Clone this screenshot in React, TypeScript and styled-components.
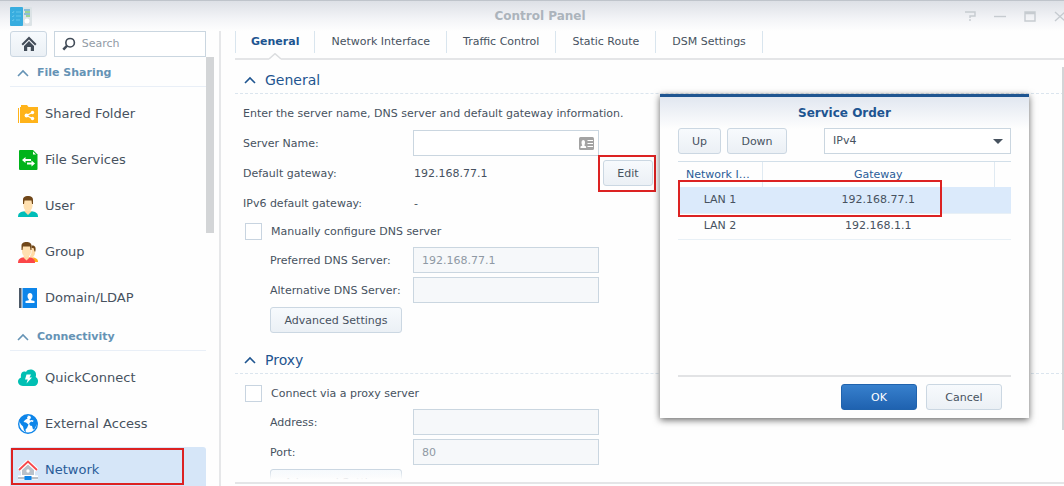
import React, { useState } from "react";
import styled, { createGlobalStyle, css } from "styled-components";

const GlobalStyle = createGlobalStyle`
  *, *::before, *::after { box-sizing: border-box; }
  body {
    margin: 0;
    background: #fefefe;
    color: #47525f;
    font: 11px/16px Verdana, "DejaVu Sans", sans-serif;
  }
  button, input, select { font: inherit; color: inherit; }
`;

const Window = styled.div`
  position: relative;
  display: flex;
  flex-direction: column;
  height: 100vh;
  overflow: hidden;
`;

/* The window frame reaches a little past the right edge of the screen. */
const TitleBar = styled.header`
  flex: none;
  display: grid;
  grid-template-columns: 1fr auto 1fr;
  align-items: center;
  width: calc(100% + 16px);
  height: 31px;
  padding: 0 10px;
  border-top: 1px solid #bfc4cb;
  background: linear-gradient(#dde0e6, #f3f4f7 60%, #fefefe);
`;

const Title = styled.h1`
  margin: 0;
  font-size: 12px;
  line-height: 16px;
  color: #acb4bc;
`;

const WindowControls = styled.div`
  display: flex;
  justify-content: flex-end;
  gap: 10px;
`;

const ControlButton = styled.button`
  display: grid;
  place-items: center;
  width: 20px;
  height: 20px;
  padding: 0;
  border: 0;
  background: none;
`;

const Main = styled.div`
  flex: 1;
  display: flex;
  min-height: 0;
`;

const Sidebar = styled.aside`
  flex: none;
  display: flex;
  flex-direction: column;
  width: 221px;
  padding-left: 10px;
  border-right: 2px solid #e6e7e9;
`;

const SearchRow = styled.div`
  flex: none;
  display: flex;
  gap: 7px;
  width: 196px;
  height: 26px;
`;

const Button = styled.button<{ $primary?: boolean; $width?: number }>`
  display: inline-flex;
  align-items: center;
  justify-content: center;
  height: 26px;
  width: ${(p) => (p.$width ? `${p.$width}px` : "auto")};
  padding: 2px 12px 0;
  border: 1px solid #cbd7e2;
  border-radius: 3px;
  background: linear-gradient(#f7fafd, #ebf0f5);
  white-space: nowrap;
  ${(p) =>
    p.$primary &&
    css`
      border-color: #2063ad;
      background: linear-gradient(#3780cd, #1f62b0);
      color: #fff;
    `}
`;

const HomeButton = styled(Button)`
  width: 37px;
  padding: 0;
`;

const SearchBox = styled.label`
  flex: 1;
  display: flex;
  align-items: center;
  gap: 6px;
  min-width: 0;
  padding: 0 7px;
  border: 1px solid #cad6e0;
  background: #fff;
`;

const SearchInput = styled.input`
  width: 100%;
  min-width: 0;
  padding: 0;
  border: 0;
  outline: 0;
  background: none;
  &::placeholder { color: #929ba5; opacity: 1; }
`;

const SidebarScroll = styled.div`
  flex: 1;
  display: flex;
  min-height: 0;
`;

const Nav = styled.nav`
  flex: none;
  width: 196px;
  overflow: hidden;
`;

const ScrollThumb = styled.div`
  width: 8px;
  height: 41%;
  background: #d3d5d7;
`;

const NavHeading = styled.button`
  display: flex;
  align-items: center;
  gap: 8px;
  width: 100%;
  height: 30px;
  padding: 3px 0 0 7px;
  border: 0;
  border-bottom: 1px solid #e9eff7;
  background: none;
  color: #6593b5;
  font-weight: bold;
`;

const NavList = styled.ul`
  margin: 0;
  padding: 4px 0 0;
  list-style: none;
`;

const NavItem = styled.li`
  position: relative;
`;

const NavLink = styled.a<{ $active?: boolean }>`
  display: flex;
  align-items: center;
  gap: 7px;
  height: 46px;
  padding-left: 8px;
  border-radius: 3px;
  background: ${(p) => (p.$active ? "#d6e6f8" : "none")};
  color: ${(p) => (p.$active ? "#2a5c98" : "#47525f")};
  font-size: 13px;
  text-decoration: none;
`;

/* Red frame that points out a spot the reader has to click. */
const Highlight = styled.span`
  position: absolute;
  inset: 1px 22px 8px 1px;
  border: 2px solid #dc2222;
  pointer-events: none;
`;

const Content = styled.main`
  flex: 1;
  display: flex;
  flex-direction: column;
  min-width: 0;
  padding: 0 0 2px 14px;
`;

const Tabs = styled.div`
  flex: none;
  display: flex;
  height: 29px;
  border-bottom: 2px solid #e4e5e7;
`;

const Tab = styled.button<{ $active?: boolean }>`
  position: relative;
  height: 22px;
  padding: 0 16px;
  border: 0;
  border-right: 1px solid #d9e5ee;
  background: none;
  white-space: nowrap;
  &:first-child {
    padding: 0 15px;
    border-left: 1px solid #d9e5ee;
  }
  ${(p) =>
    p.$active &&
    css`
      color: #1d5590;
      font-weight: bold;
    `}
`;

const TabCaret = styled.svg`
  position: absolute;
  left: calc(50% - 6px);
  top: 22px;
`;

const Pane = styled.div`
  position: relative;
  flex: 1;
  display: flex;
  flex-direction: column;
  gap: 13px;
  min-height: 0;
  padding-top: 6px;
  overflow: hidden;
  border-bottom: 2px solid #e4e5e7;
  &::after {
    content: "";
    position: absolute;
    inset: auto 0 0;
    height: 12px;
    background: linear-gradient(rgba(254, 254, 254, 0), #fefefe 80%);
  }
`;

const PaneThumb = styled.div`
  position: absolute;
  top: 7px;
  right: 0;
  width: 2px;
  height: 86%;
  background: #d3d5d7;
`;

const Section = styled.section`
  flex: none;
`;

const SectionHeading = styled.h2`
  display: flex;
  align-items: center;
  gap: 9px;
  height: 28px;
  margin: 0;
  padding-left: 9px;
  border-bottom: 1px dashed #dbe5ee;
  color: #1f5590;
  font-size: 14px;
  font-weight: normal;
`;

const SectionBody = styled.div`
  padding: 4px 0 0 8px;
`;

const Intro = styled.p`
  height: 32px;
  margin: 0;
  line-height: 32px;
`;

const Fields = styled.div<{ $indent?: boolean }>`
  display: grid;
  grid-template-columns: ${(p) => (p.$indent ? "143px" : "170px")} 186px auto;
  grid-auto-rows: 26px;
  gap: 4px 0;
  align-items: center;
  justify-content: start;
  margin-left: ${(p) => (p.$indent ? "27px" : "0")};
`;

const FieldLabel = styled.label`
  grid-column: 1;
  padding-top: 1px;
  white-space: nowrap;
`;

const FieldValue = styled.span`
  grid-column: 2;
  padding: 1px 0 0 1px;
`;

const FieldAction = styled.div`
  grid-column: 1;
  display: flex;
`;

const FieldBox = styled.div`
  grid-column: 2;
  position: relative;
  display: flex;
  align-items: center;
`;

const TextInput = styled.input`
  width: 100%;
  height: 26px;
  padding: 0 8px;
  border: 1px solid #cad6e0;
  border-radius: 0;
  background: #fff;
  &:disabled { background: #f6f8fa; color: #8f99a4; }
`;

const CardIcon = styled.svg`
  position: absolute;
  right: 5px;
`;

const EditCell = styled.div`
  position: relative;
  display: flex;
  padding-left: 4px;
  ${Highlight} { inset: -5px -3px -6px -1px; }
`;

const CheckRow = styled.label`
  display: flex;
  align-items: center;
  gap: 9px;
  height: 31px;
  padding-left: 2px;
`;

const Checkbox = styled.input`
  appearance: none;
  width: 17px;
  height: 17px;
  margin: 0;
  border: 1px solid #c8d4e0;
  background: #fff;
  &:checked { background: #3780cd; }
`;

const Dialog = styled.div`
  position: absolute;
  top: 94px;
  right: 35px;
  display: flex;
  flex-direction: column;
  width: 369px;
  height: 324px;
  padding: 0 18px;
  border-top: 3px solid #1e5591;
  background: linear-gradient(#e1e7f0, #fefefe 32px);
  box-shadow: 0 2px 7px rgba(0, 0, 0, 0.6);
`;

const DialogTitle = styled.h2`
  margin: 0;
  height: 31px;
  color: #1e5591;
  font-size: 12px;
  line-height: 32px;
  text-align: center;
`;

const Toolbar = styled.div`
  display: flex;
  gap: 6px;
  margin-bottom: 7px;
`;

const SelectBox = styled.div`
  position: relative;
  display: flex;
  align-items: center;
  width: 187px;
  margin-left: auto;
  svg { position: absolute; right: 8px; pointer-events: none; }
`;

const Select = styled.select`
  appearance: none;
  width: 100%;
  height: 26px;
  padding: 0 8px;
  border: 1px solid #cad6e0;
  border-radius: 0;
  background: #fff;
`;

const TableWrap = styled.div`
  position: relative;
  flex: 1;
  border-top: 1px solid #d2dfe9;
  border-bottom: 2px solid #e2e3e5;
  ${Highlight} { inset: 18px 69px auto 0; height: 37px; }
`;

const Table = styled.table`
  width: 100%;
  table-layout: fixed;
  border-collapse: collapse;
  text-align: center;
`;

const HeadCell = styled.th<{ $width?: number }>`
  width: ${(p) => (p.$width ? `${p.$width}px` : "auto")};
  height: 25px;
  padding: 0 8px;
  border-right: 1px solid #e0eaf2;
  color: #2a5c98;
  font-weight: normal;
  white-space: nowrap;
  overflow: hidden;
  text-overflow: ellipsis;
  &:last-child { border-right: 0; }
`;

const Row = styled.tr<{ $selected?: boolean }>`
  background: ${(p) => (p.$selected ? "#dbeafb" : "none")};
  border-bottom: 1px solid #e8f0f6;
`;

const Cell = styled.td`
  height: 26px;
  padding: 0;
`;

const DialogFooter = styled.div`
  display: flex;
  justify-content: flex-end;
  gap: 9px;
  padding: 7px 9px 8px;
`;

const Chevron = ({ color }: { color: string }) => (
  <svg width="12" height="8" viewBox="0 0 12 8" fill="none" stroke={color} strokeWidth="1.6">
    <path d="M1 7 6 2l5 5" />
  </svg>
);

const PanelLogo = () => (
  <svg width="22" height="19" viewBox="0 0 22 19">
    <rect width="22" height="19" rx="1" fill="#dce3e6" />
    <rect width="13" height="19" rx="1" fill="#38addf" />
    <path d="M2 5l1 1 1-2M6 5h5M2 9l1 1 1-2M6 9h5M2 13l1 1 1-2M6 13h4" stroke="#62c4ea" fill="none" />
    <path d="M14 3h6M14 7h6" stroke="#3c97c7" />
    <path d="M15 5h5M16 9h4" stroke="#5bc545" />
    <circle cx="17" cy="14" r="2.5" fill="#fff" />
  </svg>
);

const HomeIcon = () => (
  <svg width="16" height="16" viewBox="0 0 16 16" fill="#424c58">
    <path d="M8 .5 15.5 8l-1.4 1.4L8 3.4 1.900 9.400.5 8z" />
    <path d="M8 5l5 5v5H9.800v-4H6.200v4H3v-5z" />
  </svg>
);

const SearchIcon = () => (
  <svg width="16" height="16" viewBox="0 0 16 16" fill="none" stroke="#424c58">
    <circle cx="9.500" cy="6.500" r="5" strokeWidth="1.900" />
    <path d="M6 10 1.500 14.500" strokeWidth="3" />
  </svg>
);

const FolderIcon = () => (
  <svg width="20" height="20" viewBox="0 0 20 20">
    <path d="M0 4h1v15H0zM2 3h1V1h6l1.500 2H20v16H2z" fill="#ffb31a" />
    <path d="M14.500 8.500 8.500 11.500 14.500 14.500" stroke="#fff" strokeWidth="1.300" fill="none" />
    <g fill="#fff"><circle cx="14.500" cy="8.500" r="1.700" /><circle cx="8.500" cy="11.500" r="1.900" /><circle cx="14.500" cy="14.500" r="1.700" /></g>
  </svg>
);

const FileIcon = () => (
  <svg width="20" height="20" viewBox="0 0 20 20">
    <path d="M2 0h13l4.500 4.500V19a1 1 0 0 1-1 1H2a1 1 0 0 1-1-1V1a1 1 0 0 1 1-1z" fill="#00b31b" />
    <path d="M15 1.500V4.500h3z" fill="#fff" />
    <path d="M4 10 7.500 7v2H13v2H7.500v2zM17 13.500 13.500 10.500v2H9v2h4.500v2z" fill="#fff" />
  </svg>
);

const UserIcon = () => (
  <svg width="20" height="21" viewBox="0 0 20 21">
    <path d="M0 21c0-4 2-5 7-6h6c5 1 7 2 7 6z" fill="#00bdb8" />
    <path d="M7.500 12h5v3l1.500 0-4 4-4-4 1.500-.5z" fill="#ffd9a3" />
    <path d="M5.500 4h9v5c0 4-2 6-4.500 6s-4.500-2-4.500-6z" fill="#ffe0b0" />
    <path d="M5 8V4c0-3 2-4 5-4s5 1 5 4v4h-1l-.5-3.500h-7L6 8z" fill="#704719" />
  </svg>
);

const GroupIcon = () => (
  <svg width="20" height="21" viewBox="0 0 20 21">
    <path d="M14 15c4 1 6 2 6 5h-4z" fill="#ffad17" />
    <path d="M12 6h5c.8 4-.2 8-2.500 9.500l2 2.500-4.500-3z" fill="#ffdba8" />
    <path d="M12.500 4c4-1.500 6 1 4.800 5.500h-.8L15.500 6h-3z" fill="#704719" />
    <path d="M0 21c0-4 2-5 6-6h5c4 1 6 2 6 6z" fill="#fb4649" />
    <path d="M4 3.500h9.500v6c0 4-2.400 6-5 6s-5-2-5-6z" fill="#fff" />
    <path d="M6 12h5v3h1l-3.500 3.500L5 15l1-.5z" fill="#ffd9a3" />
    <path d="M4 4h9v5c0 4-2 6-4.500 6S4 13 4 9z" fill="#ffe0b0" />
    <path d="M3.500 8V4c0-3 2-4 5-4s5 1 5 4v4h-1L12 4.500H5L4.500 8z" fill="#704719" />
  </svg>
);

const DomainIcon = () => (
  <svg width="20" height="20" viewBox="0 0 20 20">
    <path d="M1 0h2.500v20H1z" fill="#4c5967" />
    <path d="M4.500 0H19v20H4.500z" fill="#0d85e9" />
    <path d="M9.500 8c0-4 5-4 5 0 0 1.500-.6 2.500-1.300 3.300v1L16.500 13v2h-9v-2l3.300-.7v-1C10.100 10.500 9.500 9.500 9.500 8z" fill="#fff" />
  </svg>
);

const CloudIcon = () => (
  <svg width="20" height="20" viewBox="0 0 20 20">
    <path d="M5 18c-6 0-6.500-7-2-8.500C2 4.500 5.500 2.500 8 4c2-4 10-3 10 2.500 0 1 0 1.500-.3 2.500C21.500 11 20.500 18 16 18z" fill="#00bfb3" />
    <path d="M8.500 6.500H13L11.500 9.500H14L8.500 15.500l1.200-4H7z" fill="#fff" />
  </svg>
);

const GlobeIcon = () => (
  <svg width="20" height="20" viewBox="0 0 20 20">
    <circle cx="10" cy="10" r="9.300" fill="#fff" stroke="#0d85e9" strokeWidth="1.400" />
    <path d="M1 7C2 4 5 1.500 9 1l1.500 1-1.500 1 .5 1.500L7 6 5.500 8l2.500.5L10.500 10.500 9 14l-1.500 1.500.5 3-2-2L5 12.500 3 10.500z" fill="#0d85e9" />
    <path d="M12 1c4 .5 7 4 7.500 8L18 12l-1.500 3-1.500.5-1-3.500-2-.5-.8-2L13 7.500l2 .5.5-1.500-2-.5-1.500.5-.5-1L13 4z" fill="#0d85e9" />
  </svg>
);

const NetworkIcon = () => (
  <svg width="20" height="20" viewBox="0 0 20 20">
    <path d="M3 9.500 10 3l7 6.500V16H3z" fill="#fff" />
    <path d="M4 9.500 10 4.500l6 5V15H4z" fill="#b9c1ca" />
    <circle cx="10" cy="11" r="1.700" fill="#fff" />
    <path d="M.8 10.200 10 1.500l9.200 8.700" stroke="#fff" strokeWidth="4" fill="none" />
    <path d="M1 10 10 1.500 19 10" stroke="#f8484b" strokeWidth="1.800" fill="none" />
    <path d="M0 17.500h20" stroke="#fff" strokeWidth="4" />
    <path d="M0 18h20" stroke="#b0b8c1" strokeWidth="1.800" />
    <path d="M6.500 16h7v4h-7z" fill="#0d85e9" />
  </svg>
);

const groups = [
  {
    title: "File Sharing",
    items: [
      { label: "Shared Folder", icon: <FolderIcon /> },
      { label: "File Services", icon: <FileIcon /> },
      { label: "User", icon: <UserIcon /> },
      { label: "Group", icon: <GroupIcon /> },
      { label: "Domain/LDAP", icon: <DomainIcon /> },
    ],
  },
  {
    title: "Connectivity",
    items: [
      { label: "QuickConnect", icon: <CloudIcon /> },
      { label: "External Access", icon: <GlobeIcon /> },
      { label: "Network", icon: <NetworkIcon />, active: true },
    ],
  },
];

const tabs = ["General", "Network Interface", "Traffic Control", "Static Route", "DSM Settings"];

const controls = [
  { label: "Help", path: "M1 1h10v4H6v2M6 8v2" },
  { label: "Minimize", path: "M0 5.500h12" },
  { label: "Maximize", path: "M1 1h10v9H1zM1 2.500h10" },
  { label: "Close", path: "M1 1l10 9M11 1 1 10" },
];

const orders = [
  { name: "LAN 1", gateway: "192.168.77.1" },
  { name: "LAN 2", gateway: "192.168.1.1" },
];

export default function App() {
  const [tab, setTab] = useState("General");
  const [selected, setSelected] = useState("LAN 1");

  return (
    <Window>
      <GlobalStyle />
      <TitleBar>
        <PanelLogo />
        <Title>Control Panel</Title>
        <WindowControls>
          {controls.map((c) => (
            <ControlButton key={c.label} aria-label={c.label}>
              <svg width="12" height="11" viewBox="0 0 12 11" fill="none" stroke="#c6cbd0" strokeWidth="1.400">
                <path d={c.path} />
              </svg>
            </ControlButton>
          ))}
        </WindowControls>
      </TitleBar>

      <Main>
        <Sidebar>
          <SearchRow>
            <HomeButton aria-label="Home"><HomeIcon /></HomeButton>
            <SearchBox>
              <SearchIcon />
              <SearchInput type="text" placeholder="Search" aria-label="Search" />
            </SearchBox>
          </SearchRow>
          <SidebarScroll>
            <Nav>
              {groups.map((g) => (
                <div key={g.title}>
                  <NavHeading><Chevron color="#6593b5" />{g.title}</NavHeading>
                  <NavList>
                    {g.items.map((item) => {
                      const active = "active" in item;
                      return (
                        <NavItem key={item.label}>
                          <NavLink href="#" $active={active}>{item.icon}{item.label}</NavLink>
                          {active && <Highlight />}
                        </NavItem>
                      );
                    })}
                  </NavList>
                </div>
              ))}
            </Nav>
            <ScrollThumb />
          </SidebarScroll>
        </Sidebar>

        <Content>
          <Tabs role="tablist">
            {tabs.map((t) => (
              <Tab key={t} role="tab" aria-selected={t === tab} $active={t === tab} onClick={() => setTab(t)}>
                {t}
                {t === tab && (
                  <TabCaret width="12" height="7" viewBox="0 0 12 7">
                    <path d="M0 6 6 .7 12 6v1H0z" fill="#fefefe" />
                    <path d="M0 6 6 .7 12 6" fill="none" stroke="#dcdee0" strokeWidth="1.500" />
                  </TabCaret>
                )}
              </Tab>
            ))}
          </Tabs>

          <Pane>
            <Section>
              <SectionHeading><Chevron color="#1f5590" />General</SectionHeading>
              <SectionBody>
                <Intro>Enter the server name, DNS server and default gateway information.</Intro>
                <Fields>
                  <FieldLabel htmlFor="server">Server Name:</FieldLabel>
                  <FieldBox>
                    <TextInput id="server" type="text" />
                    <CardIcon width="15" height="13" viewBox="0 0 15 13">
                      <rect width="15" height="13" rx="1.500" fill="#a3a3a3" />
                      <path d="M8.500 3.500H14M8.500 6.500H14M8.500 9.500H14" stroke="#fff" strokeWidth="1.200" />
                      <path d="M1.500 11V9.500L3.300 8.500C2 6 2.500 3 4.300 3s2.300 3 1 5.500l1.800 1V11z" fill="#fff" />
                    </CardIcon>
                  </FieldBox>
                  <FieldLabel as="span">Default gateway:</FieldLabel>
                  <FieldValue>192.168.77.1</FieldValue>
                  <EditCell>
                    <Button $width={50}>Edit</Button>
                    <Highlight />
                  </EditCell>
                  <FieldLabel as="span">IPv6 default gateway:</FieldLabel>
                  <FieldValue>-</FieldValue>
                </Fields>
                <CheckRow><Checkbox type="checkbox" />Manually configure DNS server</CheckRow>
                <Fields $indent>
                  <FieldLabel htmlFor="dns1">Preferred DNS Server:</FieldLabel>
                  <FieldBox><TextInput id="dns1" type="text" defaultValue="192.168.77.1" disabled /></FieldBox>
                  <FieldLabel htmlFor="dns2">Alternative DNS Server:</FieldLabel>
                  <FieldBox><TextInput id="dns2" type="text" disabled /></FieldBox>
                  <FieldAction><Button $width={132}>Advanced Settings</Button></FieldAction>
                </Fields>
              </SectionBody>
            </Section>

            <Section>
              <SectionHeading><Chevron color="#1f5590" />Proxy</SectionHeading>
              <SectionBody>
                <CheckRow><Checkbox type="checkbox" />Connect via a proxy server</CheckRow>
                <Fields $indent>
                  <FieldLabel htmlFor="address">Address:</FieldLabel>
                  <FieldBox><TextInput id="address" type="text" disabled /></FieldBox>
                  <FieldLabel htmlFor="port">Port:</FieldLabel>
                  <FieldBox><TextInput id="port" type="text" defaultValue="80" disabled /></FieldBox>
                  <FieldAction><Button $width={132}>Advanced Settings</Button></FieldAction>
                </Fields>
              </SectionBody>
            </Section>
            <PaneThumb />
          </Pane>
        </Content>
      </Main>

      <Dialog role="dialog" aria-labelledby="order-title">
        <DialogTitle id="order-title">Service Order</DialogTitle>
        <Toolbar>
          <Button $width={43}>Up</Button>
          <Button $width={60}>Down</Button>
          <SelectBox>
            <Select aria-label="IP version" defaultValue="IPv4">
              <option>IPv4</option>
              <option>IPv6</option>
            </Select>
            <svg width="10" height="5" viewBox="0 0 10 5"><path d="M0 0h10L5 5z" fill="#47525f" /></svg>
          </SelectBox>
        </Toolbar>
        <TableWrap>
          <Table>
            <thead>
              <tr>
                <HeadCell $width={84}>Network Interface</HeadCell>
                <HeadCell>Gateway</HeadCell>
                <HeadCell as="td" $width={16} />
              </tr>
            </thead>
            <tbody>
              {orders.map((o) => (
                <Row key={o.name} $selected={o.name === selected} onClick={() => setSelected(o.name)}>
                  <Cell>{o.name}</Cell>
                  <Cell>{o.gateway}</Cell>
                  <Cell />
                </Row>
              ))}
            </tbody>
          </Table>
          <Highlight />
        </TableWrap>
        <DialogFooter>
          <Button $primary $width={76}>OK</Button>
          <Button $width={76}>Cancel</Button>
        </DialogFooter>
      </Dialog>
    </Window>
  );
}
